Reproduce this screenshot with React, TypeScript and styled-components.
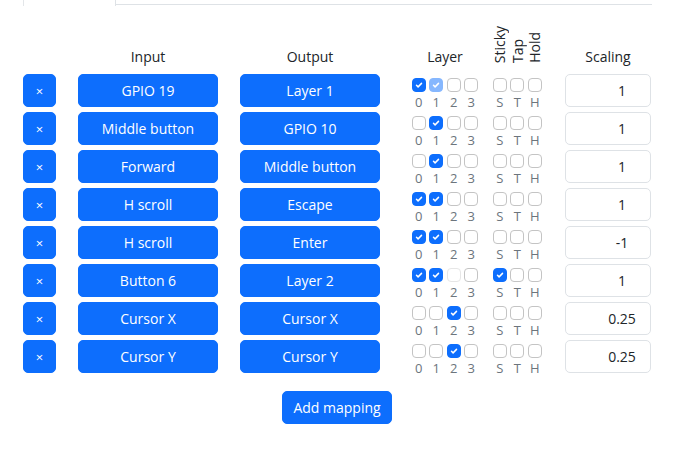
import React from "react";
import styled, { createGlobalStyle } from "styled-components";

const Global = createGlobalStyle`
  html, body { margin: 0; padding: 0; background: #fff; }
  body { font-family: "Segoe UI", "Open Sans", "Noto Sans", sans-serif; color: #212529; }
`;

const Page = styled.div`
  width: 690px;
  height: 474px;
  overflow: hidden;
  padding-left: 23px;
  box-sizing: border-box;
`;

const Nav = styled.div`
  display: flex;
  height: 5px;
  width: 629px;
`;

const ActiveTab = styled.div`
  width: 93px;
  height: 6px;
  border-left: 1px solid #e3e6e9;
  border-right: 1px solid #dee2e6;
  box-sizing: border-box;
`;

const NavFill = styled.div`
  flex: 1;
  border-bottom: 1px solid #dee2e6;
`;

const Grid = styled.div`
  display: grid;
  grid-template-columns: 55px 162px 170px 81px 74px 86px;
  grid-template-rows: 64px;
  grid-auto-rows: 33px;
  row-gap: 5px;
  align-items: start;
`;

const HeadCell = styled.div<{ $w: number }>`
  width: ${(p) => p.$w}px;
  height: 63px;
  display: flex;
  align-items: flex-end;
  justify-content: center;
  font-size: 14px;
  line-height: 20px;
  padding-bottom: 1px;
  box-sizing: border-box;
`;

const VertGroup = styled.div`
  display: flex;
  width: 53px;
  height: 63px;
  align-items: flex-end;
  padding-bottom: 5px;
  box-sizing: border-box;
`;

const VertLabel = styled.div`
  width: 17.5px;
  display: flex;
  justify-content: center;
  span {
    writing-mode: vertical-rl;
    transform: rotate(180deg);
    font-size: 14px;
    line-height: 15px;
  }
`;

const BlueButton = styled.button<{ $w: number }>`
  width: ${(p) => p.$w}px;
  height: 33px;
  background: #0d6efd;
  color: #fff;
  border: 1px solid #0d6efd;
  border-radius: 5px;
  font-family: "Segoe UI", "Open Sans", "Noto Sans", sans-serif;
  font-size: 14px;
  padding: 0;
  display: flex;
  align-items: center;
  justify-content: center;
  cursor: pointer;
`;

const CloseButton = styled(BlueButton)`
  font-size: 13px;
`;

const CheckGroup = styled.div<{ $w: number }>`
  width: ${(p) => p.$w}px;
  height: 33px;
  padding-top: 4px;
  box-sizing: border-box;
  display: flex;
  flex-direction: column;
`;

const CheckRow = styled.div`
  display: flex;
`;

const CheckCell = styled.div`
  width: 17.5px;
  display: flex;
  justify-content: center;
`;

const Box = styled.span<{ $checked: boolean; $disabled: boolean }>`
  width: 14px;
  height: 14px;
  flex: none;
  box-sizing: border-box;
  border-radius: 4px;
  border: 1px solid
    ${(p) =>
      p.$checked ? (p.$disabled ? "#86b7fe" : "#0d6efd") : p.$disabled ? "#e6e6e6" : "#c4c4c4"};
  background: ${(p) => (p.$checked ? (p.$disabled ? "#86b7fe" : "#0d6efd") : "#fff")};
  display: flex;
  align-items: center;
  justify-content: center;
`;

const Digit = styled.div`
  width: 17.5px;
  flex: none;
  text-align: center;
  font-size: 13px;
  line-height: 14px;
  margin-top: 3px;
  color: #6c757d;
`;

const ScaleInput = styled.input`
  width: 86px;
  height: 33px;
  box-sizing: border-box;
  border: 1px solid #dee2e6;
  border-radius: 5px;
  font-family: "Segoe UI", "Open Sans", "Noto Sans", sans-serif;
  font-size: 14px;
  color: #212529;
  text-align: center;
  padding: 0 8px 0 36px;
  outline: none;
  background: #fff;
`;

const Footer = styled.div`
  width: 628px;
  display: flex;
  justify-content: center;
  margin-top: 18px;
`;

const Check = () => (
  <svg width="10" height="10" viewBox="0 0 20 20">
    <path d="m5 10.5 3.2 3.2 6.8-6.9" fill="none" stroke="#fff" strokeWidth="3" strokeLinecap="round" strokeLinejoin="round" />
  </svg>
);

type CB = { c?: boolean; d?: boolean };

const Checkbox = ({ c = false, d = false }: CB) => (
  <CheckCell>
    <Box $checked={c} $disabled={d}>{c && <Check />}</Box>
  </CheckCell>
);

type Mapping = {
  input: string;
  output: string;
  layers: CB[];
  sth: CB[];
  scaling: string;
};

const e: CB = {};
const mappings: Mapping[] = [
  { input: "GPIO 19", output: "Layer 1", layers: [{ c: true }, { c: true, d: true }, e, e], sth: [e, e, e], scaling: "1" },
  { input: "Middle button", output: "GPIO 10", layers: [e, { c: true }, e, e], sth: [e, e, e], scaling: "1" },
  { input: "Forward", output: "Middle button", layers: [e, { c: true }, e, e], sth: [e, e, e], scaling: "1" },
  { input: "H scroll", output: "Escape", layers: [{ c: true }, { c: true }, e, e], sth: [e, e, e], scaling: "1" },
  { input: "H scroll", output: "Enter", layers: [{ c: true }, { c: true }, e, e], sth: [e, e, e], scaling: "-1" },
  { input: "Button 6", output: "Layer 2", layers: [{ c: true }, { c: true }, { d: true }, e], sth: [{ c: true }, e, e], scaling: "1" },
  { input: "Cursor X", output: "Cursor X", layers: [e, e, { c: true }, e], sth: [e, e, e], scaling: "0.25" },
  { input: "Cursor Y", output: "Cursor Y", layers: [e, e, { c: true }, e], sth: [e, e, e], scaling: "0.25" },
];

export default function App() {
  return (
    <Page>
      <Global />
      <Nav>
        <ActiveTab />
        <NavFill />
      </Nav>
      <Grid>
        <HeadCell $w={33} />
        <HeadCell $w={140}>Input</HeadCell>
        <HeadCell $w={140}>Output</HeadCell>
        <HeadCell $w={70}>Layer</HeadCell>
        <VertGroup>
          <VertLabel><span>Sticky</span></VertLabel>
          <VertLabel><span>Tap</span></VertLabel>
          <VertLabel><span>Hold</span></VertLabel>
        </VertGroup>
        <HeadCell $w={86}>Scaling</HeadCell>
        {mappings.map((m, i) => (
          <React.Fragment key={i}>
            <CloseButton $w={33}>×</CloseButton>
            <BlueButton $w={140}>{m.input}</BlueButton>
            <BlueButton $w={140}>{m.output}</BlueButton>
            <CheckGroup $w={70}>
              <CheckRow>
                {m.layers.map((l, j) => (
                  <Checkbox key={j} c={l.c} d={l.d} />
                ))}
              </CheckRow>
              <CheckRow>
                {["0", "1", "2", "3"].map((d) => (
                  <Digit key={d}>{d}</Digit>
                ))}
              </CheckRow>
            </CheckGroup>
            <CheckGroup $w={53}>
              <CheckRow>
                {m.sth.map((l, j) => (
                  <Checkbox key={j} c={l.c} d={l.d} />
                ))}
              </CheckRow>
              <CheckRow>
                {["S", "T", "H"].map((d) => (
                  <Digit key={d}>{d}</Digit>
                ))}
              </CheckRow>
            </CheckGroup>
            <ScaleInput readOnly value={m.scaling} />
          </React.Fragment>
        ))}
      </Grid>
      <Footer>
        <BlueButton $w={110}>Add mapping</BlueButton>
      </Footer>
    </Page>
  );
}
